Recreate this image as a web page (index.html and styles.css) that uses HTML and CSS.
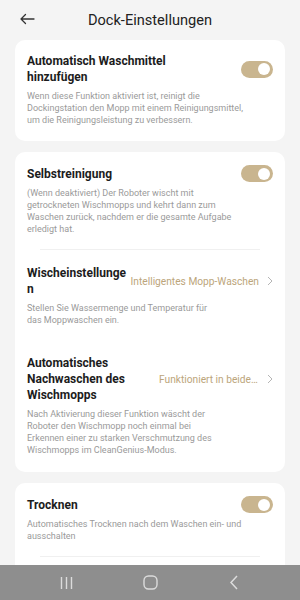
FILE: index.html
```html
<!DOCTYPE html>
<html lang="de">
<head>
<meta charset="utf-8">
<link rel="stylesheet" href="styles.css">
</head>
<body>
<header class="header">
  <svg class="back" width="16" height="12" viewBox="0 0 16 12"><path d="M15 6H2M6.5 1.5L2 6l4.5 4.5" fill="none" stroke="#333" stroke-width="1.3" stroke-linecap="round" stroke-linejoin="round"/></svg>
  <h1 class="title">Dock-Einstellungen</h1>
</header>
<main class="content">
  <section class="card">
    <div class="row">
      <div class="row-head">
        <div class="row-title">Automatisch Waschmittel hinzufügen</div>
        <span class="toggle"><span class="knob"></span></span>
      </div>
      <p class="desc">Wenn diese Funktion aktiviert ist, reinigt die Dockingstation den Mopp mit einem Reinigungsmittel, um die Reinigungsleistung zu verbessern.</p>
    </div>
  </section>
  <section class="card">
    <div class="row divided">
      <div class="row-head">
        <div class="row-title">Selbstreinigung</div>
        <span class="toggle"><span class="knob"></span></span>
      </div>
      <p class="desc">(Wenn deaktiviert) Der Roboter wischt mit getrockneten Wischmopps und kehrt dann zum Waschen zurück, nachdem er die gesamte Aufgabe erledigt hat.</p>
    </div>
    <div class="row">
      <div class="row-head">
        <div class="row-title">Wischeinstellungen</div>
        <span class="value">Intelligentes Mopp-Waschen</span>
        <svg class="chev" width="6" height="10" viewBox="0 0 6 10"><path d="M1 1l4 4-4 4" fill="none" stroke="#b5b5b5" stroke-width="1"/></svg>
      </div>
      <p class="desc narrow">Stellen Sie Wassermenge und Temperatur für das Moppwaschen ein.</p>
    </div>
    <div class="row last">
      <div class="row-head">
        <div class="row-title">Automatisches Nachwaschen des Wischmopps</div>
        <span class="value short">Funktioniert in beiden Modi</span>
        <svg class="chev" width="6" height="10" viewBox="0 0 6 10"><path d="M1 1l4 4-4 4" fill="none" stroke="#b5b5b5" stroke-width="1"/></svg>
      </div>
      <p class="desc narrow">Nach Aktivierung dieser Funktion wäscht der Roboter den Wischmopp noch einmal bei Erkennen einer zu starken Verschmutzung des Wischmopps im CleanGenius-Modus.</p>
    </div>
  </section>
  <section class="card">
    <div class="row divided">
      <div class="row-head">
        <div class="row-title">Trocknen</div>
        <span class="toggle"><span class="knob"></span></span>
      </div>
      <p class="desc">Automatisches Trocknen nach dem Waschen ein- und ausschalten</p>
    </div>
    <div class="row">
      <div class="row-head">
        <div class="row-title">Trockenzeit</div>
      </div>
    </div>
  </section>
</main>
<nav class="navbar">
  <span class="nav-slot"><svg width="13" height="14" viewBox="0 0 13 14"><path d="M1.5 1v12M6.5 1v12M11.5 1v12" stroke="#dcdcdc" stroke-width="1.4"/></svg></span>
  <span class="nav-slot"><svg width="15" height="15" viewBox="0 0 15 15"><rect x="1" y="1" width="13" height="13" rx="4.5" fill="none" stroke="#dcdcdc" stroke-width="1.4"/></svg></span>
  <span class="nav-slot"><svg width="10" height="15" viewBox="0 0 10 15"><path d="M8 1L2 7.5 8 14" fill="none" stroke="#dcdcdc" stroke-width="1.5"/></svg></span>
</nav>
</body>
</html>
```
FILE: styles.css
```css
* { box-sizing: border-box; }
html, body { margin: 0; padding: 0; }
body {
  width: 300px;
  height: 600px;
  overflow: hidden;
  background: #f4f4f4;
  font-family: Roboto, "Noto Sans", "Liberation Sans", sans-serif;
  color: #1c1c1c;
}
.header {
  height: 40px;
  display: flex;
  align-items: center;
  justify-content: center;
  position: relative;
}
.back {
  position: absolute;
  left: 19px;
  top: 13px;
}
.title {
  margin: 0;
  font-size: 14.6px;
  font-weight: 400;
  color: #222;
}
.content {
  padding: 0 15px;
  display: flex;
  flex-direction: column;
  gap: 11px;
}
.card {
  background: #fff;
  border-radius: 10px;
  padding: 0 12px;
}
.row {
  padding: 13px 0 15px;
}
.row.divided {
  position: relative;
}
.row.divided::after {
  content: "";
  position: absolute;
  left: 13px;
  right: 13px;
  bottom: 0;
  height: 1px;
  background: #f0f0f0;
}
.row + .row { padding-top: 15px; }
.row.last { padding-top: 14px; padding-bottom: 16px; }
.row-head {
  display: flex;
  align-items: center;
}
.row-title {
  flex: 1;
  min-width: 0;
  font-size: 12px;
  font-weight: 700;
  line-height: 16px;
  overflow-wrap: anywhere;
}
.toggle {
  flex-shrink: 0;
  width: 32px;
  height: 17px;
  border-radius: 9px;
  background: #c9b58f;
  display: flex;
  align-items: center;
  justify-content: flex-end;
  padding-right: 3px;
  margin-left: 24px;
}
.knob {
  width: 12px;
  height: 12px;
  border-radius: 50%;
  background: #fff;
}
.value {
  flex-shrink: 0;
  font-size: 10.2px;
  color: #bca57b;
  white-space: nowrap;
  margin-left: 2px;
}
.value.short {
  width: 100px;
  overflow: hidden;
  text-overflow: ellipsis;
}
.chev {
  flex-shrink: 0;
  margin-left: 8px;
}
.desc {
  margin: 5px 0 0;
  max-width: 216px;
  font-size: 9px;
  line-height: 12px;
  color: #9a9a9a;
}
.desc.narrow {
  max-width: 190px;
}
.navbar {
  position: fixed;
  left: 0;
  right: 0;
  bottom: 0;
  height: 35px;
  background: #8e8e8e;
  display: flex;
  align-items: center;
  justify-content: center;
}
.nav-slot {
  width: 84px;
  display: flex;
  justify-content: center;
  align-items: center;
}
```
